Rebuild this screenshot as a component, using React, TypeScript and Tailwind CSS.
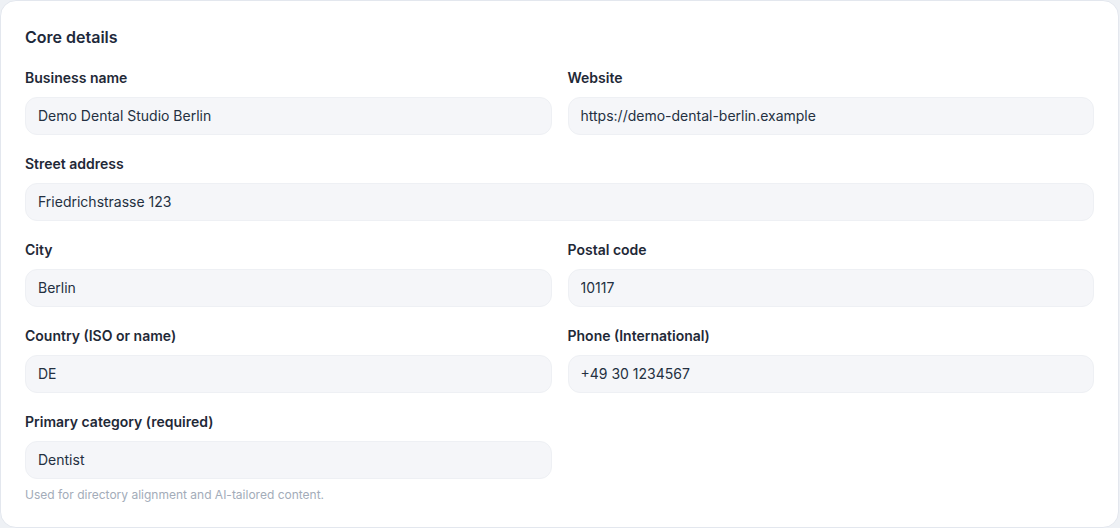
import React from "react";

const Field = ({ label, value, className = "" }: { label: string; value: string; className?: string }) => (
  <div className={"flex flex-col gap-[9px] " + className}>
    <label className="text-sm leading-5 font-semibold text-[#1f2937]">{label}</label>
    <input
      readOnly
      value={value}
      className="h-[38px] w-full rounded-xl border border-[#eef0f4] bg-[#f5f6f9] px-3 pb-[2px] text-sm text-[#243041] outline-none"
    />
  </div>
);

export default function App() {
  return (
    <div className="min-h-[528px] w-[1120px] bg-[#eef1f5] [font-family:Inter,'Liberation_Sans',sans-serif]">
      <div className="h-[528px] w-[1119px] rounded-2xl border border-[#e3e7ee] bg-white px-6 pt-6">
        <h2 className="text-base leading-6 font-semibold text-[#1e293b]">Core details</h2>
        <div className="mt-[19px] grid grid-cols-2 gap-x-4 gap-y-[19px]">
          <Field label="Business name" value="Demo Dental Studio Berlin" />
          <Field label="Website" value="https://demo-dental-berlin.example" />
          <Field label="Street address" value="Friedrichstrasse 123" className="col-span-2" />
          <Field label="City" value="Berlin" />
          <Field label="Postal code" value="10117" />
          <Field label="Country (ISO or name)" value="DE" />
          <Field label="Phone (International)" value="+49 30 1234567" />
          <div>
            <Field label="Primary category (required)" value="Dentist" />
            <p className="mt-2 text-xs leading-4 text-[#a3acb9]">Used for directory alignment and AI-tailored content.</p>
          </div>
        </div>
      </div>
    </div>
  );
}
